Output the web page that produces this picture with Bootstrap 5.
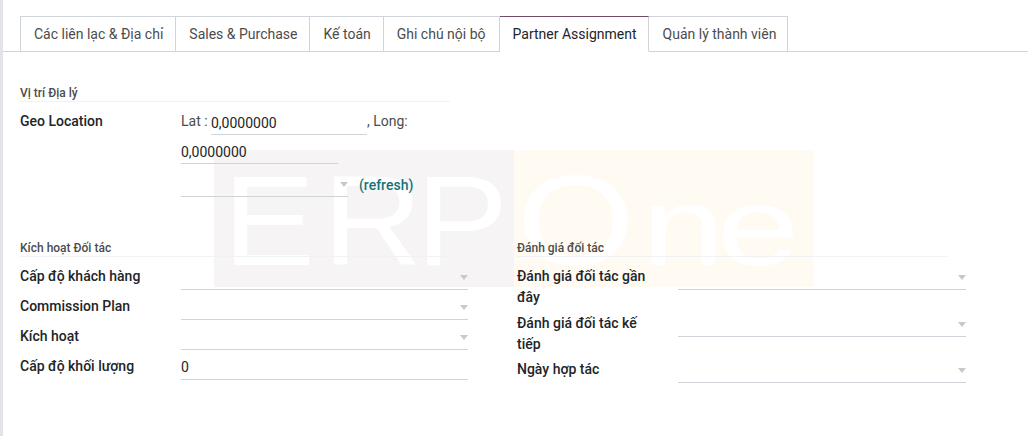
<!DOCTYPE html>
<html lang="vi">
<head>
<meta charset="utf-8">
<title>Partner Assignment</title>
<link rel="stylesheet" href="https://cdn.jsdelivr.net/npm/bootstrap@5.3.0/dist/css/bootstrap.min.css">
<style>
body{font-family:Roboto,"Noto Sans",sans-serif;font-size:14px;line-height:21px;color:#212529;background:#fff;overflow:hidden;}
.sheet{position:relative;height:436px;border-left:3px solid #e2e4ea;overflow:hidden;}
.wm{position:absolute;left:211px;top:150px;width:600px;height:137px;display:flex;}
.wm-a,.wm-b{width:300px;height:137px;display:flex;align-items:baseline;color:#fff;font-size:128px;line-height:137px;padding-top:2px;font-family:"Liberation Sans",sans-serif;white-space:nowrap;}
.wm-a{background:#f6f4f5;padding-left:9px;}
.wm-b{background:#fffaf2;padding-left:3px;}
.wm-erp{display:inline-block;transform:scaleX(1.08);transform-origin:left center;}
.wm-o{display:inline-block;transform:scaleX(1.18);transform-origin:left center;}
.wm-ne{display:inline-block;font-size:112px;margin-left:25px;transform:scaleX(1.33);transform-origin:left center;}
.ls-e{letter-spacing:7px;}
.ls-r{letter-spacing:-6px;}
.ls-n{letter-spacing:-6px;}
.content{position:relative;}
.tabbar.nav-tabs{padding:16px 0 0 17px;border-bottom:1px solid #ced4da;height:52px;flex-wrap:nowrap;--bs-nav-tabs-border-radius:0;}
.tabbar .nav-link{margin:0;padding:0 12px 0 13px;height:36px;line-height:35px;border:1px solid #ced4da;border-left:0;border-radius:0;color:#4c4c4c;background:#fff;white-space:nowrap;}
.tabbar .nav-item:first-child .nav-link{border-left:1px solid #ced4da;}
.tabbar .nav-item:nth-child(4) .nav-link{padding-right:13px;}
.tabbar .nav-item:nth-child(5) .nav-link{padding-right:11px;}
.tabbar .nav-item:nth-child(6) .nav-link{padding-left:14px;padding-right:11px;}
.tabbar .nav-link.active{color:#212529;border-top-color:#714b67;border-bottom:1px solid #fff;border-right-color:#ced4da;height:36px;}
.form-area{padding:31px 0 0 17px;}
.sec-title{font-size:12px;font-weight:500;color:#4c4c4c;line-height:20px;height:19px;border-bottom:1px solid #f1f2f3;}
.w-geo{width:430px;}
.lbl{font-weight:500;color:#212529;width:161px;flex:none;padding-right:16px;padding-bottom:4px;}
.geo-row{margin-top:8px;}
.geo-row .lbl{padding-top:1px;}
.geo-fields{padding-top:1px;}
.under{border-bottom:1px solid #ced4da;height:24px;line-height:22px;display:flex;align-items:center;justify-content:flex-end;}
.under.txt{justify-content:flex-start;}
.under.tight{padding-bottom:2px;}
.lat-lab{width:30px;flex:none;}
.w-lat{width:156px;}
.w-long{width:157px;}
.w-sel{width:167px;}
.muted{color:#4c4c4c;}
.gap-b5{margin-bottom:5px;}
.gap-b9{margin-bottom:9px;}
.caret{width:0;height:0;border-left:4.5px solid transparent;border-right:4.5px solid transparent;border-top:5px solid #c9c9c9;}
.ref{color:#12747b;font-weight:500;margin-left:11px;line-height:22px;padding-top:1px;}
.twocols{margin-top:41px;}
.col-a{width:448px;flex:none;}
.col-b{width:449px;flex:none;margin-left:49px;}
.col-b .lbl{padding-bottom:4.5px;}
.w-title{width:430px;}
.rows{margin-top:9px;}
.rowf{display:flex;align-items:flex-start;}
.rowf .under{flex:1;margin-bottom:6px;}
</style>
</head>
<body>
<div class="sheet">
  <div class="wm">
    <div class="wm-a"><span class="wm-erp"><span class="ls-e">E</span><span class="ls-r">R</span>P</span></div>
    <div class="wm-b"><span class="wm-o">O</span><span class="wm-ne"><span class="ls-n">n</span>e</span></div>
  </div>
  <div class="content">
    <ul class="nav nav-tabs tabbar">
      <li class="nav-item"><a class="nav-link" href="#">Các liên lạc &amp; Địa chỉ</a></li>
      <li class="nav-item"><a class="nav-link" href="#">Sales &amp; Purchase</a></li>
      <li class="nav-item"><a class="nav-link" href="#">Kế toán</a></li>
      <li class="nav-item"><a class="nav-link" href="#">Ghi chú nội bộ</a></li>
      <li class="nav-item"><a class="nav-link active" href="#">Partner Assignment</a></li>
      <li class="nav-item"><a class="nav-link" href="#">Quản lý thành viên</a></li>
    </ul>
    <div class="form-area">
      <div class="sec-title w-geo">Vị trí Địa lý</div>
      <div class="d-flex geo-row">
        <div class="lbl">Geo Location</div>
        <div class="geo-fields">
          <div class="d-flex gap-b5">
            <span class="muted lat-lab">Lat :</span>
            <div class="under txt w-lat">0,0000000</div>
            <span class="muted">, Long:</span>
          </div>
          <div class="under txt w-long gap-b9">0,0000000</div>
          <div class="d-flex">
            <div class="under w-sel"><span class="caret"></span></div>
            <span class="ref">(refresh)</span>
          </div>
        </div>
      </div>
      <div class="d-flex twocols">
        <div class="col-a">
          <div class="sec-title w-title">Kích hoạt Đối tác</div>
          <div class="rows">
            <div class="rowf"><div class="lbl">Cấp độ khách hàng</div><div class="under"><span class="caret"></span></div></div>
            <div class="rowf"><div class="lbl">Commission Plan</div><div class="under"><span class="caret"></span></div></div>
            <div class="rowf"><div class="lbl">Kích hoạt</div><div class="under"><span class="caret"></span></div></div>
            <div class="rowf"><div class="lbl">Cấp độ khối lượng</div><div class="under txt tight">0</div></div>
          </div>
        </div>
        <div class="col-b">
          <div class="sec-title w-title">Đánh giá đối tác</div>
          <div class="rows">
            <div class="rowf"><div class="lbl">Đánh giá đối tác gần đây</div><div class="under"><span class="caret"></span></div></div>
            <div class="rowf"><div class="lbl">Đánh giá đối tác kế tiếp</div><div class="under"><span class="caret"></span></div></div>
            <div class="rowf"><div class="lbl">Ngày hợp tác</div><div class="under"><span class="caret"></span></div></div>
          </div>
        </div>
      </div>
    </div>
  </div>
</div>
<script src="https://cdn.jsdelivr.net/npm/bootstrap@5.3.0/dist/js/bootstrap.bundle.min.js"></script>
</body>
</html>
